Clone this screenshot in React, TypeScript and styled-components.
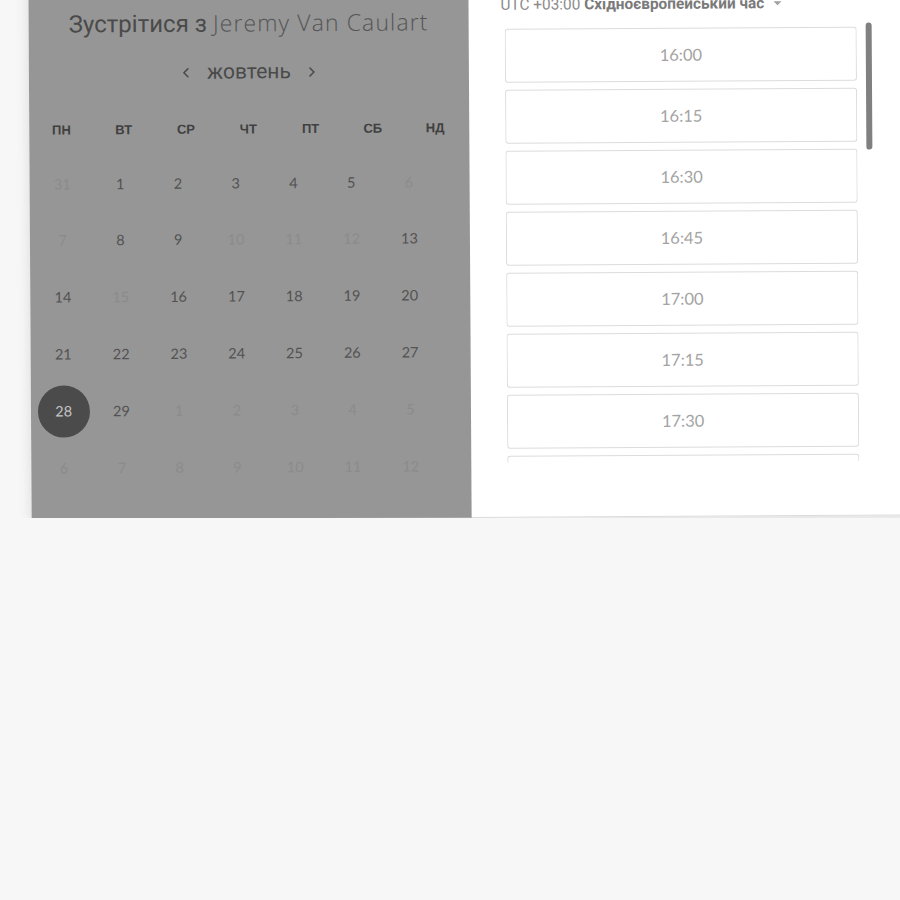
import styled, { createGlobalStyle } from "styled-components";

const GlobalStyle = createGlobalStyle`
  html, body {
    margin: 0;
    padding: 0;
    background: #f7f7f7;
    overflow: hidden;
    font-family: "Roboto", "Liberation Sans", sans-serif;
  }
`;

type Day = { n: number; off?: boolean; selected?: boolean };

const weekdays = ["пн", "вт", "ср", "чт", "пт", "сб", "нд"];

// жовтень, з понеділка
const days: Day[] = [
  { n: 31, off: true }, { n: 1 }, { n: 2 }, { n: 3 }, { n: 4 }, { n: 5 }, { n: 6, off: true },
  { n: 7, off: true }, { n: 8 }, { n: 9 }, { n: 10, off: true }, { n: 11, off: true }, { n: 12, off: true }, { n: 13 },
  { n: 14 }, { n: 15, off: true }, { n: 16 }, { n: 17 }, { n: 18 }, { n: 19 }, { n: 20 },
  { n: 21 }, { n: 22 }, { n: 23 }, { n: 24 }, { n: 25 }, { n: 26 }, { n: 27 },
  { n: 28, selected: true }, { n: 29 }, { n: 1, off: true }, { n: 2, off: true }, { n: 3, off: true }, { n: 4, off: true }, { n: 5, off: true },
  { n: 6, off: true }, { n: 7, off: true }, { n: 8, off: true }, { n: 9, off: true }, { n: 10, off: true }, { n: 11, off: true }, { n: 12, off: true },
];

const slots: string[] = [];
for (let i = 0; i < 25; i++) {
  const m = 16 * 60 + i * 15;
  slots.push(`${Math.floor(m / 60)}:${String(m % 60).padStart(2, "0")}`);
}

function Chevron({ dir }: { dir: "left" | "right" }) {
  return (
    <svg width="8" height="12" viewBox="0 0 8 12">
      <polyline
        points={dir === "left" ? "6,2 2,6 6,10" : "2,2 6,6 2,10"}
        fill="none"
        stroke="#4a4a4a"
        strokeWidth="1.6"
        strokeLinecap="round"
        strokeLinejoin="round"
      />
    </svg>
  );
}

function App() {
  return (
    <>
      <GlobalStyle />
      <Card>
        <CalendarPane>
          <Title>
            Зустрітися з <Host>Jeremy Van Caulart</Host>
          </Title>
          <MonthNav>
            <NavBtn>
              <Chevron dir="left" />
            </NavBtn>
            <Month>жовтень</Month>
            <NavBtn>
              <Chevron dir="right" />
            </NavBtn>
          </MonthNav>
          <WeekHeader>
            {weekdays.map((w) => (
              <WeekDay key={w}>{w}</WeekDay>
            ))}
          </WeekHeader>
          <DayGrid>
            {days.map((d, idx) => (
              <DayCell key={idx} $off={d.off} $selected={d.selected}>
                {d.n}
              </DayCell>
            ))}
          </DayGrid>
        </CalendarPane>
        <TimePane>
          <Zone>
            UTC +03:00 <b>Східноєвропейський час</b>
            <Caret />
          </Zone>
          <ScrollArea>
            <SlotList>
              {slots.map((s) => (
                <Slot key={s}>{s}</Slot>
              ))}
            </SlotList>
            <Track>
              <Thumb />
            </Track>
          </ScrollArea>
        </TimePane>
      </Card>
    </>
  );
}

const Card = styled.div`
  display: flex;
  width: 900px;
  height: 538px;
  margin: -20px 0 0 30px;
  background: #fff;
  box-shadow: 0 1px 14px rgba(0, 0, 0, 0.12);
  border-bottom: 1px solid #dcdcdc;
  box-sizing: border-box;
  transform: rotate(-0.35deg);
`;

const CalendarPane = styled.div`
  width: 440px;
  flex-shrink: 0;
  background: #969696;
  border-bottom: 1px solid #a9a9a9;
  margin-bottom: -1px;
  padding-top: 26px;
  box-sizing: border-box;
`;

const Title = styled.div`
  text-align: center;
  font-family: "Roboto", "Liberation Sans", sans-serif;
  font-size: 24px;
  line-height: 30px;
  color: #4a4a4a;
  white-space: nowrap;
`;

const Host = styled.span`
  font-family: "Open Sans", "Lato", sans-serif;
  font-weight: 300;
  font-size: 23px;
  letter-spacing: 1.1px;
  color: #555;
`;

const MonthNav = styled.div`
  display: flex;
  justify-content: center;
  align-items: center;
  gap: 17px;
  margin-top: 19px;
  height: 28px;
`;

const NavBtn = styled.div`
  display: flex;
  align-items: center;
  padding-top: 1px;
`;

const Month = styled.div`
  font-size: 21px;
  line-height: 28px;
  color: #4a4a4a;
`;

const WeekHeader = styled.div`
  display: grid;
  grid-template-columns: repeat(7, 1fr);
  padding: 0 3px 0 1px;
  margin-top: 36px;
`;

const WeekDay = styled.div`
  text-align: center;
  text-transform: uppercase;
  font-family: "Liberation Sans", "Roboto", sans-serif;
  font-weight: 700;
  font-size: 13px;
  line-height: 16px;
  color: #404040;
`;

const DayGrid = styled.div`
  display: grid;
  grid-template-columns: repeat(7, 52px);
  grid-auto-rows: 52px;
  column-gap: 5.8px;
  row-gap: 4.9px;
  padding-left: 6.7px;
  margin-top: 19px;
`;

const DayCell = styled.div<{ $off?: boolean; $selected?: boolean }>`
  display: flex;
  align-items: center;
  justify-content: center;
  border-radius: 50%;
  font-family: "Lato", "Roboto", sans-serif;
  font-size: 14.5px;
  color: ${(p) => (p.$selected ? "#c4c4c4" : p.$off ? "#8b8b8b" : "#525252")};
  background: ${(p) => (p.$selected ? "#4b4b4b" : "transparent")};
`;

const TimePane = styled.div`
  flex: 1;
  padding: 16px 0 0 32px;
`;

const Zone = styled.div`
  display: flex;
  align-items: center;
  font-size: 15.4px;
  line-height: 18px;
  color: #8c8c8c;
  white-space: pre;

  b {
    color: #7a7a7a;
    font-weight: 700;
  }
`;

const Caret = styled.span`
  margin-left: 9px;
  width: 0;
  height: 0;
  border-left: 4px solid transparent;
  border-right: 4px solid transparent;
  border-top: 4px solid #a0a0a0;
`;

const ScrollArea = styled.div`
  display: flex;
  align-items: flex-start;
  gap: 9px;
  margin: 11px 0 0 4px;
  height: 438px;
`;

const SlotList = styled.div`
  width: 352px;
  height: 100%;
  padding-top: 4px;
  box-sizing: border-box;
  overflow: hidden;
  display: flex;
  flex-direction: column;
  gap: 7px;
`;

const Track = styled.div`
  width: 6px;
  height: 100%;
`;

const Thumb = styled.div`
  width: 6px;
  height: 127px;
  border-radius: 3px;
  background: #808080;
`;

const Slot = styled.div`
  flex-shrink: 0;
  height: 54px;
  display: flex;
  align-items: center;
  justify-content: center;
  border: 1px solid #dcdcdc;
  border-radius: 3px;
  box-sizing: border-box;
  font-family: "Lato", "Roboto", sans-serif;
  font-size: 16.5px;
  color: #a3a3a3;
`;

export default App;
